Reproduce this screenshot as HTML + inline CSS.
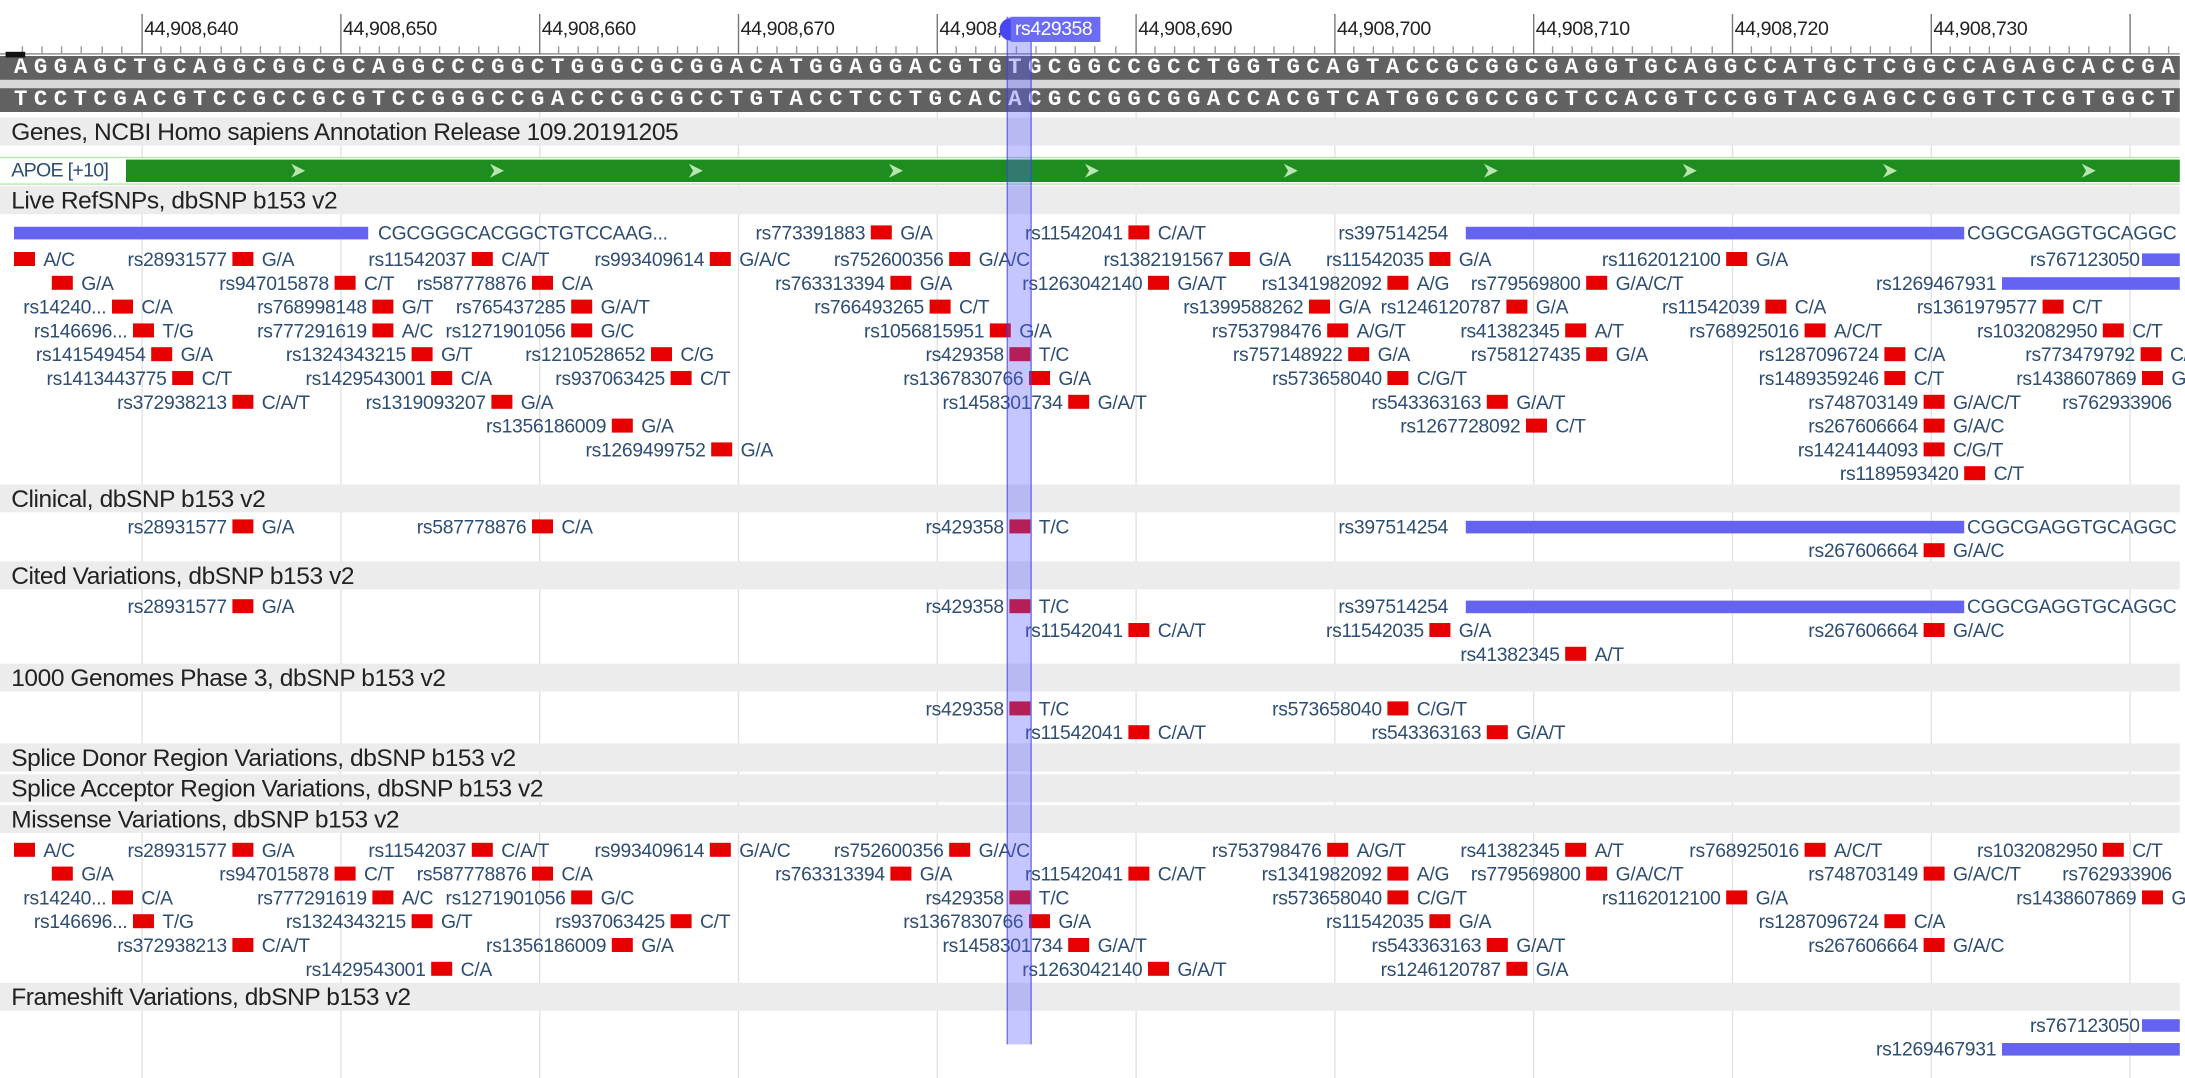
<!DOCTYPE html>
<html><head><meta charset="utf-8"><style>
html,body{margin:0;padding:0;background:#fff;width:2185px;height:1077px;overflow:hidden}
#w{position:absolute;left:0;top:0;width:1561px;height:770px;transform:scale(1.4);transform-origin:0 0;font-family:"Liberation Sans",Arial,sans-serif;color:#2d4d72}
.ab{position:absolute}
.lab{position:absolute;top:12px;font-size:14px;color:#222;letter-spacing:-0.3px}
.maj{position:absolute;top:10px;width:1px;height:29px;background:#777}
.grid{position:absolute;top:40px;width:1px;height:730px;background:#e2e2e2}
.seq{position:absolute;left:0;width:1557px;height:17px;background:#616161;color:#fff;font:bold 16px/17px "Liberation Mono",monospace;letter-spacing:4.6px;white-space:pre;overflow:hidden}
.hd{position:absolute;left:0;width:1557px;height:20px;background:#ececec;font-size:17.5px;line-height:20px;color:#222;padding-left:8px;box-sizing:border-box;letter-spacing:-0.3px;white-space:nowrap}
.s{position:absolute;width:0;height:15px;font-size:13.8px;line-height:15px;letter-spacing:-0.2px}
.s::before{content:"";position:absolute;left:0;top:2px;width:15px;height:10px;background:#e60000}
.n{position:absolute;right:0;padding-right:4px;white-space:nowrap}
.a{position:absolute;left:21px;white-space:nowrap}
.bar{position:absolute;height:9px;background:#6464f0}
.t{position:absolute;font-size:13.8px;line-height:15px;white-space:nowrap;letter-spacing:-0.2px}
</style></head><body><div id="w">
<!-- ruler -->
<div class="ab" style="left:0;top:38px;width:1557px;height:1px;background:#888"></div>
<svg class="ab" style="left:0;top:0" width="1561" height="40">
<g stroke="#999" stroke-width="1">
<path d="M16 33v5M30 33v5M44 33v5M58 33v5M73 33v5M87 33v5M115 33v5M129 33v5M143 33v5M158 33v5M172 33v5M186 33v5M200 33v5M214 33v5M229 33v5M257 33v5M271 33v5M285 33v5M300 33v5M314 33v5M328 33v5M342 33v5M356 33v5M371 33v5M399 33v5M413 33v5M427 33v5M442 33v5M456 33v5M470 33v5M484 33v5M498 33v5M513 33v5M541 33v5M555 33v5M569 33v5M584 33v5M598 33v5M612 33v5M626 33v5M640 33v5M655 33v5M683 33v5M697 33v5M711 33v5M726 33v5M740 33v5M754 33v5M768 33v5M782 33v5M797 33v5M825 33v5M839 33v5M853 33v5M868 33v5M882 33v5M896 33v5M910 33v5M924 33v5M939 33v5M967 33v5M981 33v5M995 33v5M1010 33v5M1024 33v5M1038 33v5M1052 33v5M1066 33v5M1081 33v5M1109 33v5M1123 33v5M1137 33v5M1152 33v5M1166 33v5M1180 33v5M1194 33v5M1208 33v5M1223 33v5M1251 33v5M1265 33v5M1279 33v5M1294 33v5M1308 33v5M1322 33v5M1336 33v5M1350 33v5M1365 33v5M1393 33v5M1407 33v5M1421 33v5M1436 33v5M1450 33v5M1464 33v5M1478 33v5M1492 33v5M1507 33v5M1535 33v5M1549 33v5"/>
</g></svg>
<div class="maj" style="left:101px"></div><div class="lab" style="left:103px">44,908,640</div>
<div class="maj" style="left:243px"></div><div class="lab" style="left:245px">44,908,650</div>
<div class="maj" style="left:385px"></div><div class="lab" style="left:387px">44,908,660</div>
<div class="maj" style="left:527px"></div><div class="lab" style="left:529px">44,908,670</div>
<div class="maj" style="left:669px"></div><div class="lab" style="left:671px">44,908,680</div>
<div class="maj" style="left:811px"></div><div class="lab" style="left:813px">44,908,690</div>
<div class="maj" style="left:953px"></div><div class="lab" style="left:955px">44,908,700</div>
<div class="maj" style="left:1095px"></div><div class="lab" style="left:1097px">44,908,710</div>
<div class="maj" style="left:1237px"></div><div class="lab" style="left:1239px">44,908,720</div>
<div class="maj" style="left:1379px"></div><div class="lab" style="left:1381px">44,908,730</div>
<div class="maj" style="left:1521px"></div>
<!-- grid -->
<div class="grid" style="left:101px"></div><div class="grid" style="left:243px"></div><div class="grid" style="left:385px"></div><div class="grid" style="left:527px"></div><div class="grid" style="left:669px"></div><div class="grid" style="left:811px"></div><div class="grid" style="left:953px"></div><div class="grid" style="left:1095px"></div><div class="grid" style="left:1237px"></div><div class="grid" style="left:1379px"></div><div class="grid" style="left:1521px"></div>
<!-- sequences -->
<div class="ab" style="left:0;top:57px;width:1557px;height:6px;background:#d8d8d8"></div>
<div class="seq" style="top:40px;padding-left:10px;box-sizing:border-box">AGGAGCTGCAGGCGGCGCAGGCCCGGCTGGGCGCGGACATGGAGGACGTGTGCGGCCGCCTGGTGCAGTACCGCGGCGAGGTGCAGGCCATGCTCGGCCAGAGCACCGA</div>
<div class="seq" style="top:63px;padding-left:10px;box-sizing:border-box">TCCTCGACGTCCGCCGCGTCCGGGCCGACCCGCGCCTGTACCTCCTGCACACGCCGGCGGACCACGTCATGGCGCCGCTCCACGTCCGGTACGAGCCGGTCTCGTGGCT</div>
<div class="ab" style="left:4px;top:37px;width:14px;height:4px;background:#111"></div>
<!-- genes -->
<div class="hd" style="top:84px">Genes, NCBI Homo sapiens Annotation Release 109.20191205</div>
<div class="ab" style="left:0;top:112px;width:1557px;height:20px;background:#fcfffb;border-top:1px solid #b6e8ae;border-bottom:1px solid #b6e8ae;box-sizing:border-box"></div>
<div class="t" style="left:8px;top:114px;font-size:14px;letter-spacing:-0.5px">APOE [+10]</div>
<div class="ab" style="left:90px;top:114px;width:1467px;height:16px;background:#1e8c1e"></div>
<svg class="ab" style="left:0;top:114px" width="1561" height="16">
<g fill="#b8e6b0"><path d="M208 3l10 5-10 5 3-5z"/><path d="M350 3l10 5-10 5 3-5z"/><path d="M492 3l10 5-10 5 3-5z"/><path d="M635 3l10 5-10 5 3-5z"/><path d="M775 3l10 5-10 5 3-5z"/><path d="M917 3l10 5-10 5 3-5z"/><path d="M1060 3l10 5-10 5 3-5z"/><path d="M1202 3l10 5-10 5 3-5z"/><path d="M1345 3l10 5-10 5 3-5z"/><path d="M1487 3l10 5-10 5 3-5z"/></g></svg>
<!-- Live RefSNPs -->
<div class="hd" style="top:133px">Live RefSNPs, dbSNP b153 v2</div>
<div class="bar" style="left:10px;top:162px;width:253px"></div><div class="t" style="left:270px;top:159px">CGCGGGCACGGCTGTCCAAG...</div>
<div class="s" style="left:622px;top:159px"><span class="n">rs773391883</span><span class="a">G/A</span></div>
<div class="s" style="left:806px;top:159px"><span class="n">rs11542041</span><span class="a">C/A/T</span></div>
<div class="t" style="left:956px;top:159px">rs397514254</div><div class="bar" style="left:1047px;top:162px;width:356px"></div><div class="t" style="left:1405px;top:159px">CGGCGAGGTGCAGGC</div>

<div class="s" style="left:10px;top:178px"><span class="a">A/C</span></div>
<div class="s" style="left:166px;top:178px"><span class="n">rs28931577</span><span class="a">G/A</span></div>
<div class="s" style="left:337px;top:178px"><span class="n">rs11542037</span><span class="a">C/A/T</span></div>
<div class="s" style="left:507px;top:178px"><span class="n">rs993409614</span><span class="a">G/A/C</span></div>
<div class="s" style="left:678px;top:178px"><span class="n">rs752600356</span><span class="a">G/A/C</span></div>
<div class="s" style="left:878px;top:178px"><span class="n">rs1382191567</span><span class="a">G/A</span></div>
<div class="s" style="left:1021px;top:178px"><span class="n">rs11542035</span><span class="a">G/A</span></div>
<div class="s" style="left:1233px;top:178px"><span class="n">rs1162012100</span><span class="a">G/A</span></div>
<div class="t" style="left:1450px;top:178px">rs767123050</div><div class="bar" style="left:1530px;top:181px;width:27px"></div>

<div class="s" style="left:37px;top:195px"><span class="a">G/A</span></div>
<div class="s" style="left:239px;top:195px"><span class="n">rs947015878</span><span class="a">C/T</span></div>
<div class="s" style="left:380px;top:195px"><span class="n">rs587778876</span><span class="a">C/A</span></div>
<div class="s" style="left:636px;top:195px"><span class="n">rs763313394</span><span class="a">G/A</span></div>
<div class="s" style="left:820px;top:195px"><span class="n">rs1263042140</span><span class="a">G/A/T</span></div>
<div class="s" style="left:991px;top:195px"><span class="n">rs1341982092</span><span class="a">A/G</span></div>
<div class="s" style="left:1133px;top:195px"><span class="n">rs779569800</span><span class="a">G/A/C/T</span></div>
<div class="t" style="left:1340px;top:195px">rs1269467931</div><div class="bar" style="left:1430px;top:198px;width:127px"></div>

<div class="s" style="left:80px;top:212px"><span class="n">rs14240...</span><span class="a">C/A</span></div>
<div class="s" style="left:266px;top:212px"><span class="n">rs768998148</span><span class="a">G/T</span></div>
<div class="s" style="left:408px;top:212px"><span class="n">rs765437285</span><span class="a">G/A/T</span></div>
<div class="s" style="left:664px;top:212px"><span class="n">rs766493265</span><span class="a">C/T</span></div>
<div class="s" style="left:935px;top:212px"><span class="n">rs1399588262</span><span class="a">G/A</span></div>
<div class="s" style="left:1076px;top:212px"><span class="n">rs1246120787</span><span class="a">G/A</span></div>
<div class="s" style="left:1261px;top:212px"><span class="n">rs11542039</span><span class="a">C/A</span></div>
<div class="s" style="left:1459px;top:212px"><span class="n">rs1361979577</span><span class="a">C/T</span></div>

<div class="s" style="left:95px;top:229px"><span class="n">rs146696...</span><span class="a">T/G</span></div>
<div class="s" style="left:266px;top:229px"><span class="n">rs777291619</span><span class="a">A/C</span></div>
<div class="s" style="left:408px;top:229px"><span class="n">rs1271901056</span><span class="a">G/C</span></div>
<div class="s" style="left:707px;top:229px"><span class="n">rs1056815951</span><span class="a">G/A</span></div>
<div class="s" style="left:948px;top:229px"><span class="n">rs753798476</span><span class="a">A/G/T</span></div>
<div class="s" style="left:1118px;top:229px"><span class="n">rs41382345</span><span class="a">A/T</span></div>
<div class="s" style="left:1289px;top:229px"><span class="n">rs768925016</span><span class="a">A/C/T</span></div>
<div class="s" style="left:1502px;top:229px"><span class="n">rs1032082950</span><span class="a">C/T</span></div>

<div class="s" style="left:108px;top:246px"><span class="n">rs141549454</span><span class="a">G/A</span></div>
<div class="s" style="left:294px;top:246px"><span class="n">rs1324343215</span><span class="a">G/T</span></div>
<div class="s" style="left:465px;top:246px"><span class="n">rs1210528652</span><span class="a">C/G</span></div>
<div class="s" style="left:721px;top:246px"><span class="n">rs429358</span><span class="a">T/C</span></div>
<div class="s" style="left:963px;top:246px"><span class="n">rs757148922</span><span class="a">G/A</span></div>
<div class="s" style="left:1133px;top:246px"><span class="n">rs758127435</span><span class="a">G/A</span></div>
<div class="s" style="left:1346px;top:246px"><span class="n">rs1287096724</span><span class="a">C/A</span></div>
<div class="s" style="left:1529px;top:246px"><span class="n">rs773479792</span><span class="a">C/A.</span></div>

<div class="s" style="left:123px;top:263px"><span class="n">rs1413443775</span><span class="a">C/T</span></div>
<div class="s" style="left:308px;top:263px"><span class="n">rs1429543001</span><span class="a">C/A</span></div>
<div class="s" style="left:479px;top:263px"><span class="n">rs937063425</span><span class="a">C/T</span></div>
<div class="s" style="left:735px;top:263px"><span class="n">rs1367830766</span><span class="a">G/A</span></div>
<div class="s" style="left:991px;top:263px"><span class="n">rs573658040</span><span class="a">C/G/T</span></div>
<div class="s" style="left:1346px;top:263px"><span class="n">rs1489359246</span><span class="a">C/T</span></div>
<div class="s" style="left:1530px;top:263px"><span class="n">rs1438607869</span><span class="a">G</span></div>

<div class="s" style="left:166px;top:280px"><span class="n">rs372938213</span><span class="a">C/A/T</span></div>
<div class="s" style="left:351px;top:280px"><span class="n">rs1319093207</span><span class="a">G/A</span></div>
<div class="s" style="left:763px;top:280px"><span class="n">rs1458301734</span><span class="a">G/A/T</span></div>
<div class="s" style="left:1062px;top:280px"><span class="n">rs543363163</span><span class="a">G/A/T</span></div>
<div class="s" style="left:1374px;top:280px"><span class="n">rs748703149</span><span class="a">G/A/C/T</span></div>
<div class="t" style="left:1473px;top:280px">rs762933906</div>

<div class="s" style="left:437px;top:297px"><span class="n">rs1356186009</span><span class="a">G/A</span></div>
<div class="s" style="left:1090px;top:297px"><span class="n">rs1267728092</span><span class="a">C/T</span></div>
<div class="s" style="left:1374px;top:297px"><span class="n">rs267606664</span><span class="a">G/A/C</span></div>

<div class="s" style="left:508px;top:314px"><span class="n">rs1269499752</span><span class="a">G/A</span></div>
<div class="s" style="left:1374px;top:314px"><span class="n">rs1424144093</span><span class="a">C/G/T</span></div>

<div class="s" style="left:1403px;top:331px"><span class="n">rs1189593420</span><span class="a">C/T</span></div>

<!-- Clinical -->
<div class="hd" style="top:346px">Clinical, dbSNP b153 v2</div>
<div class="s" style="left:166px;top:369px"><span class="n">rs28931577</span><span class="a">G/A</span></div>
<div class="s" style="left:380px;top:369px"><span class="n">rs587778876</span><span class="a">C/A</span></div>
<div class="s" style="left:721px;top:369px"><span class="n">rs429358</span><span class="a">T/C</span></div>
<div class="t" style="left:956px;top:369px">rs397514254</div><div class="bar" style="left:1047px;top:372px;width:356px"></div><div class="t" style="left:1405px;top:369px">CGGCGAGGTGCAGGC</div>
<div class="s" style="left:1374px;top:386px"><span class="n">rs267606664</span><span class="a">G/A/C</span></div>

<!-- Cited -->
<div class="hd" style="top:401px">Cited Variations, dbSNP b153 v2</div>
<div class="s" style="left:166px;top:426px"><span class="n">rs28931577</span><span class="a">G/A</span></div>
<div class="s" style="left:721px;top:426px"><span class="n">rs429358</span><span class="a">T/C</span></div>
<div class="t" style="left:956px;top:426px">rs397514254</div><div class="bar" style="left:1047px;top:429px;width:356px"></div><div class="t" style="left:1405px;top:426px">CGGCGAGGTGCAGGC</div>
<div class="s" style="left:806px;top:443px"><span class="n">rs11542041</span><span class="a">C/A/T</span></div>
<div class="s" style="left:1021px;top:443px"><span class="n">rs11542035</span><span class="a">G/A</span></div>
<div class="s" style="left:1374px;top:443px"><span class="n">rs267606664</span><span class="a">G/A/C</span></div>
<div class="s" style="left:1118px;top:460px"><span class="n">rs41382345</span><span class="a">A/T</span></div>

<!-- 1000G -->
<div class="hd" style="top:474px">1000 Genomes Phase 3, dbSNP b153 v2</div>
<div class="s" style="left:721px;top:499px"><span class="n">rs429358</span><span class="a">T/C</span></div>
<div class="s" style="left:991px;top:499px"><span class="n">rs573658040</span><span class="a">C/G/T</span></div>
<div class="s" style="left:806px;top:516px"><span class="n">rs11542041</span><span class="a">C/A/T</span></div>
<div class="s" style="left:1062px;top:516px"><span class="n">rs543363163</span><span class="a">G/A/T</span></div>

<div class="hd" style="top:531px">Splice Donor Region Variations, dbSNP b153 v2</div>
<div class="hd" style="top:553px">Splice Acceptor Region Variations, dbSNP b153 v2</div>
<div class="hd" style="top:575px">Missense Variations, dbSNP b153 v2</div>

<div class="s" style="left:10px;top:600px"><span class="a">A/C</span></div>
<div class="s" style="left:166px;top:600px"><span class="n">rs28931577</span><span class="a">G/A</span></div>
<div class="s" style="left:337px;top:600px"><span class="n">rs11542037</span><span class="a">C/A/T</span></div>
<div class="s" style="left:507px;top:600px"><span class="n">rs993409614</span><span class="a">G/A/C</span></div>
<div class="s" style="left:678px;top:600px"><span class="n">rs752600356</span><span class="a">G/A/C</span></div>
<div class="s" style="left:948px;top:600px"><span class="n">rs753798476</span><span class="a">A/G/T</span></div>
<div class="s" style="left:1118px;top:600px"><span class="n">rs41382345</span><span class="a">A/T</span></div>
<div class="s" style="left:1289px;top:600px"><span class="n">rs768925016</span><span class="a">A/C/T</span></div>
<div class="s" style="left:1502px;top:600px"><span class="n">rs1032082950</span><span class="a">C/T</span></div>

<div class="s" style="left:37px;top:617px"><span class="a">G/A</span></div>
<div class="s" style="left:239px;top:617px"><span class="n">rs947015878</span><span class="a">C/T</span></div>
<div class="s" style="left:380px;top:617px"><span class="n">rs587778876</span><span class="a">C/A</span></div>
<div class="s" style="left:636px;top:617px"><span class="n">rs763313394</span><span class="a">G/A</span></div>
<div class="s" style="left:806px;top:617px"><span class="n">rs11542041</span><span class="a">C/A/T</span></div>
<div class="s" style="left:991px;top:617px"><span class="n">rs1341982092</span><span class="a">A/G</span></div>
<div class="s" style="left:1133px;top:617px"><span class="n">rs779569800</span><span class="a">G/A/C/T</span></div>
<div class="s" style="left:1374px;top:617px"><span class="n">rs748703149</span><span class="a">G/A/C/T</span></div>
<div class="t" style="left:1473px;top:617px">rs762933906</div>

<div class="s" style="left:80px;top:634px"><span class="n">rs14240...</span><span class="a">C/A</span></div>
<div class="s" style="left:266px;top:634px"><span class="n">rs777291619</span><span class="a">A/C</span></div>
<div class="s" style="left:408px;top:634px"><span class="n">rs1271901056</span><span class="a">G/C</span></div>
<div class="s" style="left:721px;top:634px"><span class="n">rs429358</span><span class="a">T/C</span></div>
<div class="s" style="left:991px;top:634px"><span class="n">rs573658040</span><span class="a">C/G/T</span></div>
<div class="s" style="left:1233px;top:634px"><span class="n">rs1162012100</span><span class="a">G/A</span></div>
<div class="s" style="left:1530px;top:634px"><span class="n">rs1438607869</span><span class="a">G</span></div>

<div class="s" style="left:95px;top:651px"><span class="n">rs146696...</span><span class="a">T/G</span></div>
<div class="s" style="left:294px;top:651px"><span class="n">rs1324343215</span><span class="a">G/T</span></div>
<div class="s" style="left:479px;top:651px"><span class="n">rs937063425</span><span class="a">C/T</span></div>
<div class="s" style="left:735px;top:651px"><span class="n">rs1367830766</span><span class="a">G/A</span></div>
<div class="s" style="left:1021px;top:651px"><span class="n">rs11542035</span><span class="a">G/A</span></div>
<div class="s" style="left:1346px;top:651px"><span class="n">rs1287096724</span><span class="a">C/A</span></div>

<div class="s" style="left:166px;top:668px"><span class="n">rs372938213</span><span class="a">C/A/T</span></div>
<div class="s" style="left:437px;top:668px"><span class="n">rs1356186009</span><span class="a">G/A</span></div>
<div class="s" style="left:763px;top:668px"><span class="n">rs1458301734</span><span class="a">G/A/T</span></div>
<div class="s" style="left:1062px;top:668px"><span class="n">rs543363163</span><span class="a">G/A/T</span></div>
<div class="s" style="left:1374px;top:668px"><span class="n">rs267606664</span><span class="a">G/A/C</span></div>

<div class="s" style="left:308px;top:685px"><span class="n">rs1429543001</span><span class="a">C/A</span></div>
<div class="s" style="left:820px;top:685px"><span class="n">rs1263042140</span><span class="a">G/A/T</span></div>
<div class="s" style="left:1076px;top:685px"><span class="n">rs1246120787</span><span class="a">G/A</span></div>

<div class="hd" style="top:702px">Frameshift Variations, dbSNP b153 v2</div>
<div class="t" style="left:1450px;top:725px">rs767123050</div><div class="bar" style="left:1530px;top:728px;width:27px"></div>
<div class="t" style="left:1340px;top:742px">rs1269467931</div><div class="bar" style="left:1430px;top:745px;width:127px"></div>

<!-- highlight -->
<div class="ab" style="left:719px;top:12px;width:16px;height:734px;background:rgba(90,90,255,0.35);border-left:1px solid rgba(60,60,230,0.6);border-right:1px solid rgba(60,60,230,0.6)"></div>
<div class="ab" style="left:714px;top:13px;width:12px;height:16px;border-radius:8px 0 0 8px;background:#4848f0"></div>
<div class="ab" style="left:722px;top:12px;width:64px;height:18px;background:#6b6bf5;color:#fff;font-size:13.8px;line-height:18px;padding-left:3px;box-sizing:border-box;letter-spacing:-0.3px;white-space:nowrap">rs429358</div>
</div></body></html>
